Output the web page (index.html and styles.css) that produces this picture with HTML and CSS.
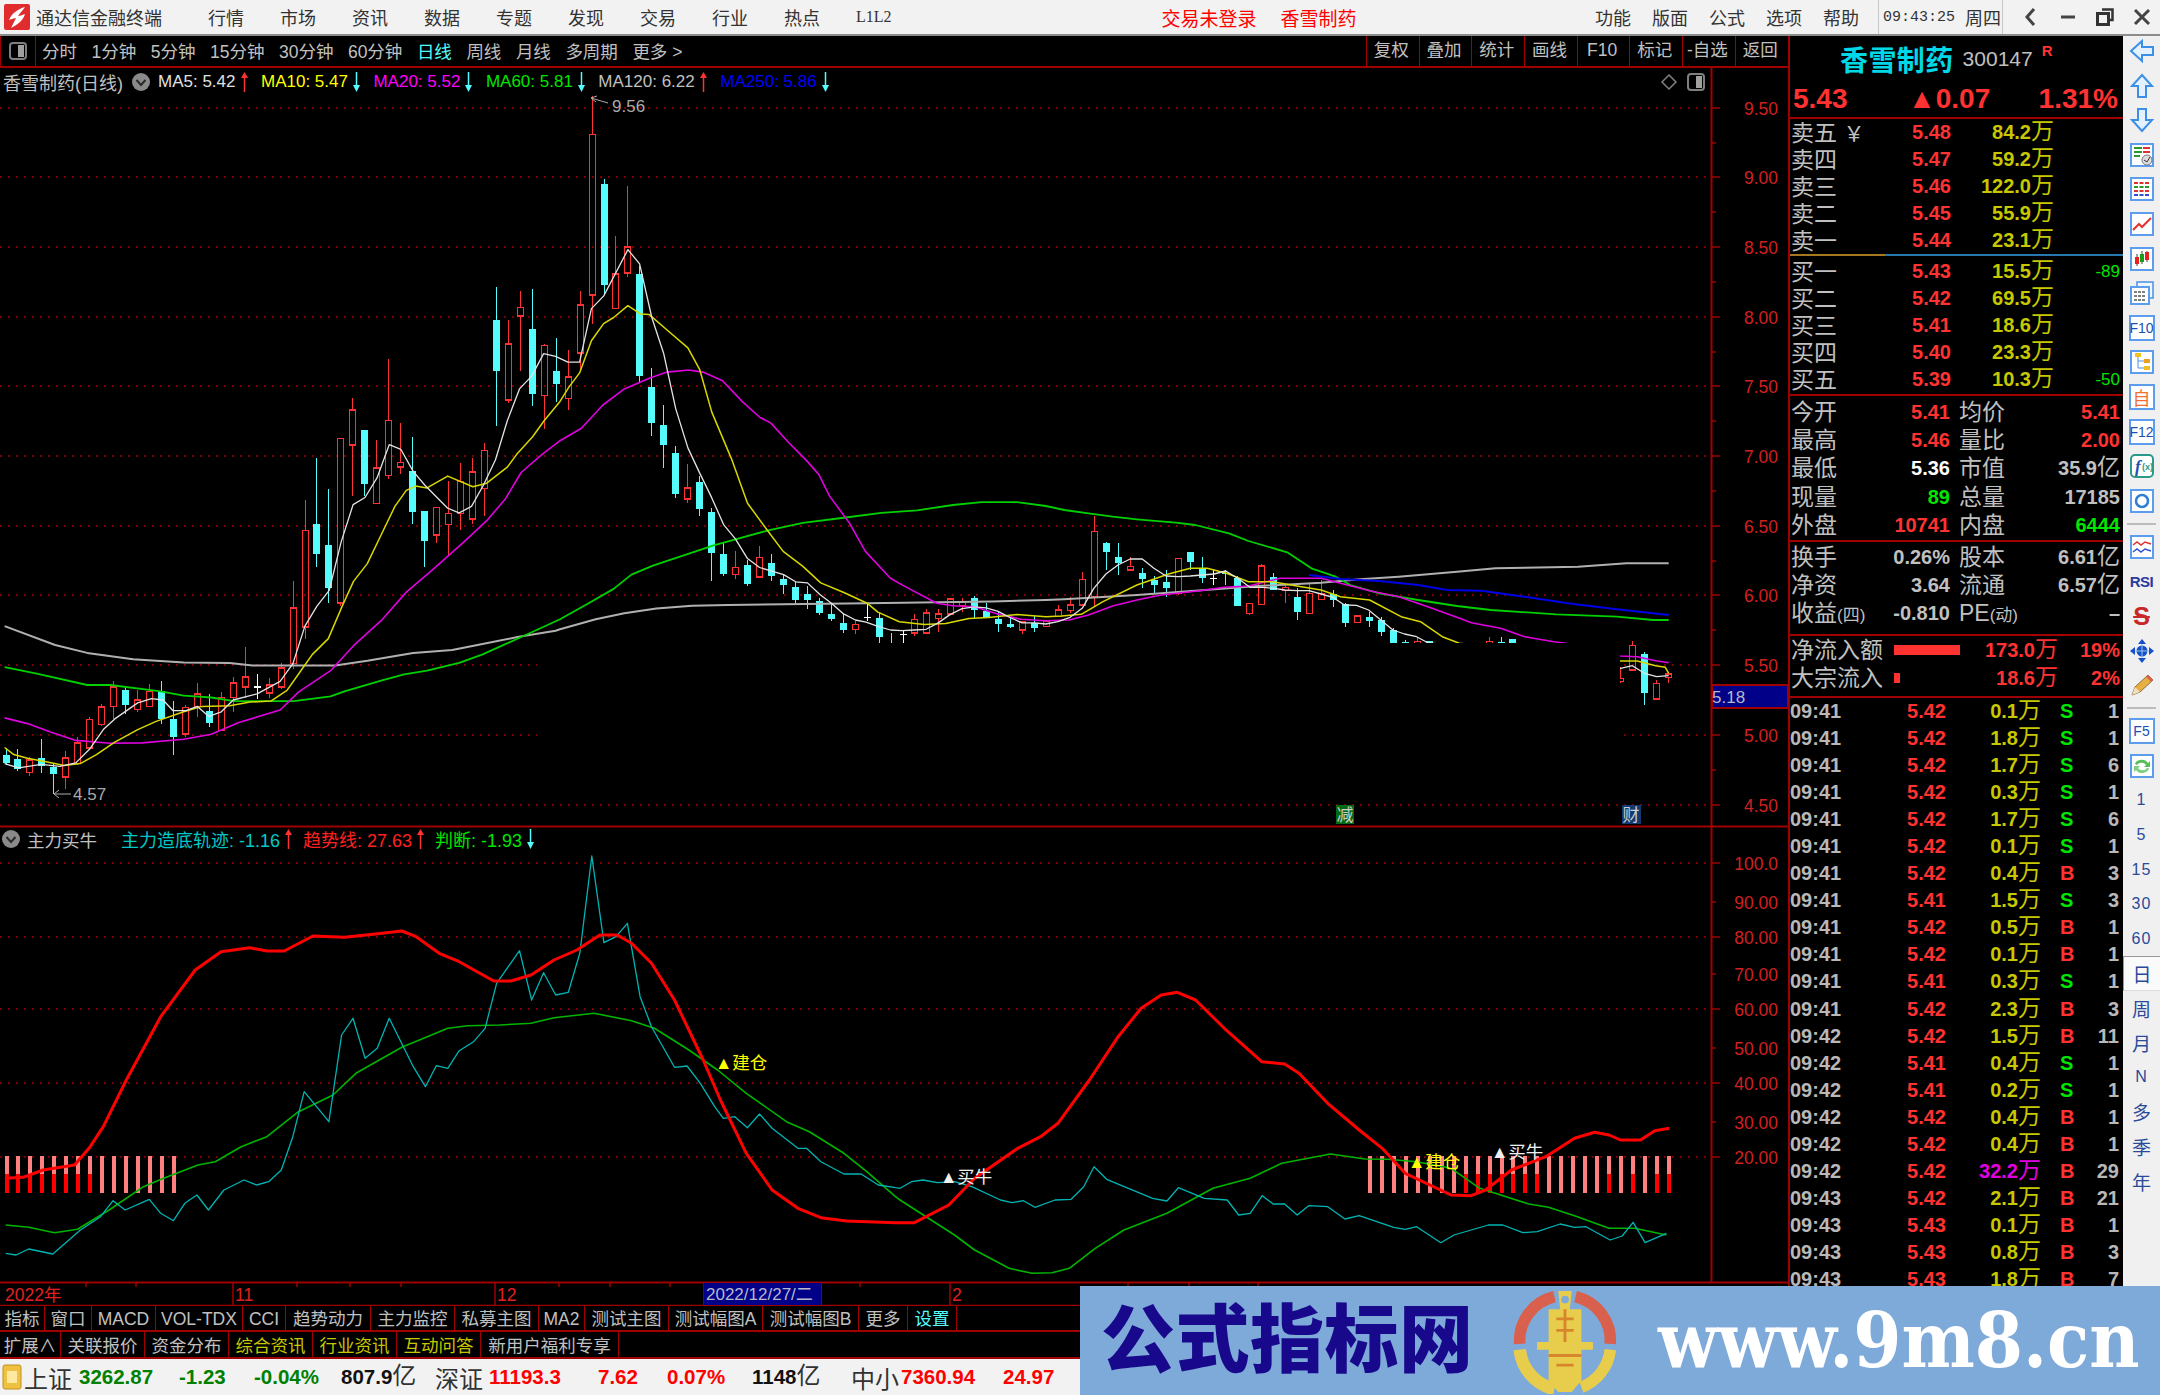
FILE: index.html
```html
<!DOCTYPE html>
<html lang="zh-CN">
<head>
    <meta charset="UTF-8">
    <title>通达信金融终端</title>
    <link rel="stylesheet" href="styles.css">
</head>
<body>
<svg class="defs">
    <symbol id="up" viewBox="0 0 9 20"><path d="M4.5 4V20" stroke="#ff3232" stroke-width="1.5"/><path d="M4.5 0L8 6H1Z" fill="#ff3232"/></symbol>
    <symbol id="dn" viewBox="0 0 9 20"><path d="M4.5 0V15" stroke="#54fcfc" stroke-width="1.5"/><path d="M4.5 20L1 13H8Z" fill="#54fcfc"/></symbol>
    <symbol id="chev" viewBox="0 0 18 18"><circle cx="9" cy="9" r="9" fill="#8a8a8a"/><path d="M4.5 7L9 12L13.500 7" fill="none" stroke="#2a2a2a" stroke-width="2"/></symbol>
    <symbol id="panebtn" viewBox="0 0 18 18"><rect x="1" y="1" width="16" height="16" rx="3" fill="none" stroke="#808080" stroke-width="2"/><rect x="9" y="3" width="6" height="12" fill="#a0a0a0"/></symbol>
</svg>
<div class="app">
    <div class="titlebar">
        <svg class="logo" viewBox="0 0 26 26"><rect width="26" height="26" rx="2" fill="#e02c2c"/><path d="M21 3C14 5 8 9 5 16C8 15 10 14 12 14L7 24C13 21 19 17 21 10C18 11 16 12 14 12C16 9 19 6 21 3Z" fill="#fff"/></svg>
        <span class="app-name">通达信金融终端</span>
        <nav class="menu">
            <span>行情</span><span>市场</span><span>资讯</span><span>数据</span><span>专题</span><span>发现</span><span>交易</span><span>行业</span><span>热点</span><span class="l2">L1L2</span>
        </nav>
        <div class="alerts"><span>交易未登录</span><span>香雪制药</span></div>
        <nav class="menu2">
            <span>功能</span><span>版面</span><span>公式</span><span>选项</span><span>帮助</span>
        </nav>
        <div class="clock"><span class="time">09:43:25</span><span>周四</span></div>
        <div class="winbtns">
            <svg viewBox="0 0 20 20"><path d="M13 2L6 10L13 18" fill="none" stroke="#444" stroke-width="3"/></svg>
            <svg viewBox="0 0 20 20"><path d="M3 10H17" stroke="#444" stroke-width="3"/></svg>
            <svg viewBox="0 0 20 20"><path d="M7 2.500H17.500V13H14" fill="none" stroke="#333" stroke-width="2.500"/><rect x="2.500" y="6.500" width="11" height="11" fill="none" stroke="#333" stroke-width="3"/></svg>
            <svg viewBox="0 0 20 20"><path d="M3 3L17 17M17 3L3 17" stroke="#444" stroke-width="3"/></svg>
        </div>
    </div>

    <div class="work">
        <div class="left">
            <div class="periods">
                <div class="pane-toggle"><svg><use href="#panebtn"/></svg></div>
                <div class="period-list">
                    <span>分时</span><span>1分钟</span><span>5分钟</span><span>15分钟</span><span>30分钟</span><span>60分钟</span><span class="on">日线</span><span>周线</span><span>月线</span><span>多周期</span><span>更多 &gt;</span>
                </div>
                <div class="chart-tools">
                    <span>复权</span><span>叠加</span><span>统计</span><span>画线</span><span>F10</span><span>标记</span><span>-自选</span><span>返回</span>
                </div>
            </div>
            <div class="charts">
                <svg id="chart" class="chart" viewBox="0 68 1788 1238"></svg>
                <div class="legend legend-main">
                    <span class="stock">香雪制药(日线)</span>
                    <svg class="chev"><use href="#chev"/></svg>
                    <span class="c-white">MA5: 5.42</span><svg class="arr"><use href="#up"/></svg>
                    <span class="c-yellow">MA10: 5.47</span><svg class="arr"><use href="#dn"/></svg>
                    <span class="c-magenta">MA20: 5.52</span><svg class="arr"><use href="#dn"/></svg>
                    <span class="c-green">MA60: 5.81</span><svg class="arr"><use href="#dn"/></svg>
                    <span class="c-gray">MA120: 6.22</span><svg class="arr"><use href="#up"/></svg>
                    <span class="c-blue">MA250: 5.86</span><svg class="arr"><use href="#dn"/></svg>
                </div>
                <div class="legend-icons">
                    <svg viewBox="0 0 18 18"><path d="M9 2L16 9L9 16L2 9Z" fill="none" stroke="#808080" stroke-width="1.500"/></svg>
                    <svg><use href="#panebtn"/></svg>
                </div>
                <div class="legend legend-sub">
                    <svg class="chev"><use href="#chev"/></svg>
                    <span class="stock name2">主力买牛</span>
                    <span class="c-cyan t1">主力造底轨迹: -1.16</span><svg class="arr"><use href="#up"/></svg>
                    <span class="c-red">趋势线: 27.63</span><svg class="arr"><use href="#up"/></svg>
                    <span class="c-green">判断: -1.93</span><svg class="arr"><use href="#dn"/></svg>
                </div>
            </div>
            <div class="tabs tabs1">
                <span>指标</span><span>窗口</span><span>MACD</span><span>VOL-TDX</span><span>CCI</span><span>趋势动力</span><span>主力监控</span><span>私募主图</span><span>MA2</span><span>测试主图</span><span>测试幅图A</span><span>测试幅图B</span><span>更多</span><span class="c-cyan">设置</span>
            </div>
            <div class="tabs tabs2">
                <span>扩展∧</span><span>关联报价</span><span>资金分布</span><span class="gold">综合资讯</span><span class="gold">行业资讯</span><span class="gold">互动问答</span><span>新用户福利专享</span>
            </div>
        </div>

        <div class="quote">
            <div class="q-head">
                <div class="q-name"><b>香雪制药</b><span>300147</span><i>R</i></div>
                <div class="q-price"><b>5.43</b><b class="chg">▲0.07</b><b class="pct">1.31%</b></div>
            </div>
            <div class="book sell">
                <div class="row"><span class="lbl">卖五 <small>￥</small></span><span class="px">5.48</span><span class="vol">84.2<em>万</em></span></div>
                <div class="row"><span class="lbl">卖四</span><span class="px">5.47</span><span class="vol">59.2<em>万</em></span></div>
                <div class="row"><span class="lbl">卖三</span><span class="px">5.46</span><span class="vol">122.0<em>万</em></span></div>
                <div class="row"><span class="lbl">卖二</span><span class="px">5.45</span><span class="vol">55.9<em>万</em></span></div>
                <div class="row"><span class="lbl">卖一</span><span class="px">5.44</span><span class="vol">23.1<em>万</em></span></div>
            </div>
            <div class="mid"><div class="mid-a"></div><div class="mid-b"></div></div>
            <div class="book buy">
                <div class="row"><span class="lbl">买一</span><span class="px">5.43</span><span class="vol">15.5<em>万</em></span><span class="delta">-89</span></div>
                <div class="row"><span class="lbl">买二</span><span class="px">5.42</span><span class="vol">69.5<em>万</em></span></div>
                <div class="row"><span class="lbl">买三</span><span class="px">5.41</span><span class="vol">18.6<em>万</em></span></div>
                <div class="row"><span class="lbl">买四</span><span class="px">5.40</span><span class="vol">23.3<em>万</em></span></div>
                <div class="row"><span class="lbl">买五</span><span class="px">5.39</span><span class="vol">10.3<em>万</em></span><span class="delta">-50</span></div>
            </div>
            <div class="stats s1">
                <span class="lbl">今开</span><span class="r">5.41</span><span class="lbl">均价</span><span class="r">5.41</span>
                <span class="lbl">最高</span><span class="r">5.46</span><span class="lbl">量比</span><span class="r">2.00</span>
                <span class="lbl">最低</span><span class="w">5.36</span><span class="lbl">市值</span><span class="g">35.9<em>亿</em></span>
                <span class="lbl">现量</span><span class="gr">89</span><span class="lbl">总量</span><span class="g">17185</span>
                <span class="lbl">外盘</span><span class="r">10741</span><span class="lbl">内盘</span><span class="gr">6444</span>
            </div>
            <div class="stats s2">
                <span class="lbl">换手</span><span class="g">0.26%</span><span class="lbl">股本</span><span class="g">6.61<em>亿</em></span>
                <span class="lbl">净资</span><span class="g">3.64</span><span class="lbl">流通</span><span class="g">6.57<em>亿</em></span>
                <span class="lbl">收益<small>(四)</small></span><span class="g">-0.810</span><span class="lbl">PE<small>(动)</small></span><span class="g">–</span>
            </div>
            <div class="flow">
                <div class="flow-row"><span class="lbl">净流入额</span><div class="flow-bar"><div class="bar bar-a"></div></div><span class="r amt">173.0<em>万</em></span><span class="r share">19%</span></div>
                <div class="flow-row"><span class="lbl">大宗流入</span><div class="flow-bar"><div class="bar bar-b"></div></div><span class="r amt">18.6<em>万</em></span><span class="r share">2%</span></div>
            </div>
            <div class="ticks">
                <div class="tick"><span>09:41</span><span class="px">5.42</span><span class="v">0.1<em>万</em></span><span class="s">S</span><span>1</span></div>
                <div class="tick"><span>09:41</span><span class="px">5.42</span><span class="v">1.8<em>万</em></span><span class="s">S</span><span>1</span></div>
                <div class="tick"><span>09:41</span><span class="px">5.42</span><span class="v">1.7<em>万</em></span><span class="s">S</span><span>6</span></div>
                <div class="tick"><span>09:41</span><span class="px">5.42</span><span class="v">0.3<em>万</em></span><span class="s">S</span><span>1</span></div>
                <div class="tick"><span>09:41</span><span class="px">5.42</span><span class="v">1.7<em>万</em></span><span class="s">S</span><span>6</span></div>
                <div class="tick"><span>09:41</span><span class="px">5.42</span><span class="v">0.1<em>万</em></span><span class="s">S</span><span>1</span></div>
                <div class="tick"><span>09:41</span><span class="px">5.42</span><span class="v">0.4<em>万</em></span><span class="b">B</span><span>3</span></div>
                <div class="tick"><span>09:41</span><span class="px">5.41</span><span class="v">1.5<em>万</em></span><span class="s">S</span><span>3</span></div>
                <div class="tick"><span>09:41</span><span class="px">5.42</span><span class="v">0.5<em>万</em></span><span class="b">B</span><span>1</span></div>
                <div class="tick"><span>09:41</span><span class="px">5.42</span><span class="v">0.1<em>万</em></span><span class="b">B</span><span>1</span></div>
                <div class="tick"><span>09:41</span><span class="px">5.41</span><span class="v">0.3<em>万</em></span><span class="s">S</span><span>1</span></div>
                <div class="tick"><span>09:41</span><span class="px">5.42</span><span class="v">2.3<em>万</em></span><span class="b">B</span><span>3</span></div>
                <div class="tick"><span>09:42</span><span class="px">5.42</span><span class="v">1.5<em>万</em></span><span class="b">B</span><span>11</span></div>
                <div class="tick"><span>09:42</span><span class="px">5.41</span><span class="v">0.4<em>万</em></span><span class="s">S</span><span>1</span></div>
                <div class="tick"><span>09:42</span><span class="px">5.41</span><span class="v">0.2<em>万</em></span><span class="s">S</span><span>1</span></div>
                <div class="tick"><span>09:42</span><span class="px">5.42</span><span class="v">0.4<em>万</em></span><span class="b">B</span><span>1</span></div>
                <div class="tick"><span>09:42</span><span class="px">5.42</span><span class="v">0.4<em>万</em></span><span class="b">B</span><span>1</span></div>
                <div class="tick"><span>09:42</span><span class="px">5.42</span><span class="v big">32.2<em>万</em></span><span class="b">B</span><span>29</span></div>
                <div class="tick"><span>09:43</span><span class="px">5.42</span><span class="v">2.1<em>万</em></span><span class="b">B</span><span>21</span></div>
                <div class="tick"><span>09:43</span><span class="px">5.43</span><span class="v">0.1<em>万</em></span><span class="b">B</span><span>1</span></div>
                <div class="tick"><span>09:43</span><span class="px">5.43</span><span class="v">0.8<em>万</em></span><span class="b">B</span><span>3</span></div>
                <div class="tick"><span>09:43</span><span class="px">5.43</span><span class="v">1.8<em>万</em></span><span class="b">B</span><span>7</span></div>
            </div>
        </div>

        <div class="side">
            <svg class="ico" viewBox="0 0 26 26"><path d="M2 13L13 3V9H24V17H13V23Z" fill="#e4f1ff" stroke="#3b8fe6" stroke-width="2"/></svg>
            <svg class="ico" viewBox="0 0 26 26"><path d="M13 2L23 13H17V24H9V13H3Z" fill="#e4f1ff" stroke="#3b8fe6" stroke-width="2"/></svg>
            <svg class="ico" viewBox="0 0 26 26"><path d="M13 24L3 13H9V2H17V13H23Z" fill="#e4f1ff" stroke="#3b8fe6" stroke-width="2"/></svg>
            <svg class="ico" viewBox="0 0 26 26"><rect class="frame" x="2" y="2" width="22" height="22"/><path d="M5 6H13M5 10H13M5 14H11" stroke="#2a9a2a" stroke-width="2"/><path d="M14 6H21M14 10H21" stroke="#e03030" stroke-width="2"/><circle cx="18" cy="18" r="5" fill="#ddd" stroke="#777"/><path d="M15 18L18 20L21 15" fill="none" stroke="#333"/></svg>
            <svg class="ico" viewBox="0 0 26 26"><rect class="frame" x="2" y="2" width="22" height="22"/><path d="M5 7H21M5 15H21" stroke="#e03030" stroke-width="2" stroke-dasharray="4 1.500"/><path d="M5 11H21" stroke="#2a9a2a" stroke-width="2" stroke-dasharray="4 1.500"/><path d="M5 19H21" stroke="#3050d0" stroke-width="2" stroke-dasharray="4 1.500"/></svg>
            <svg class="ico" viewBox="0 0 26 26"><rect class="frame" x="2" y="2" width="22" height="22"/><path d="M4 19L10 13L13 16L22 7" fill="none" stroke="#e83030" stroke-width="2"/></svg>
            <svg class="ico" viewBox="0 0 26 26"><rect class="frame" x="2" y="2" width="22" height="22"/><path d="M8 8V20M13 5V18M18 5V16" stroke="#444"/><rect x="6" y="11" width="4" height="7" fill="#e82020"/><rect x="11" y="8" width="4" height="8" fill="#18a018"/><rect x="16" y="6" width="4" height="8" fill="#e82020"/></svg>
            <svg class="ico" viewBox="0 0 26 26"><rect x="8" y="2" width="16" height="16" fill="#eef6ff" stroke="#4a90e0" stroke-width="1.500"/><rect class="frame" x="2" y="7" width="18" height="17"/><path d="M5 12H17M5 16H17M5 20H17" stroke="#555" stroke-width="1.500" stroke-dasharray="3 1"/></svg>
            <div class="ico-text framed">F10</div>
            <svg class="ico" viewBox="0 0 26 26"><rect class="frame" x="2" y="2" width="22" height="22"/><rect x="6" y="4" width="6" height="4" fill="#f0c020"/><rect x="15" y="10" width="6" height="4" fill="#f0a020"/><rect x="15" y="17" width="6" height="4" fill="#f0c020"/><path d="M9 8V19H15M9 12H15" fill="none" stroke="#4a90e0"/></svg>
            <div class="ico-text framed orange">自</div>
            <div class="ico-text framed">F12</div>
            <svg class="ico" viewBox="0 0 26 26"><rect x="2" y="2" width="22" height="22" rx="4" fill="#fff" stroke="#2a9a8a" stroke-width="2"/><text x="6" y="19" class="fx">f</text><text x="13" y="17" class="fx2">(x)</text></svg>
            <svg class="ico" viewBox="0 0 26 26"><rect class="frame" x="2" y="2" width="22" height="22"/><circle cx="13" cy="13" r="6" fill="none" stroke="#2f7fd8" stroke-width="2.500"/></svg>
            <div class="side-sep"></div>
            <svg class="ico" viewBox="0 0 26 26"><rect class="frame" x="2" y="2" width="22" height="22"/><path d="M4 11L8 8L12 11L16 8L22 10" fill="none" stroke="#e03030" stroke-width="1.500"/><path d="M4 18L8 15L12 18L16 15L22 17" fill="none" stroke="#3050d0" stroke-width="1.500"/></svg>
            <div class="ico-text rsi">RSI</div>
            <div class="ico-text dollar">S</div>
            <svg class="ico" viewBox="0 0 26 26"><path d="M13 1L17 6H9ZM13 25L9 20H17ZM1 13L6 9V17ZM25 13L20 17V9Z" fill="#1450c8"/><circle cx="13" cy="13" r="5.500" fill="#1450c8"/><path d="M13 6V20M6 13H20" stroke="#9cc0f0"/></svg>
            <svg class="ico" viewBox="0 0 26 26"><path d="M3 23L6 15L19 3L24 8L11 20Z" fill="#e8b040" stroke="#8a7040"/><path d="M3 23L6 15L11 20Z" fill="#f0e0c0"/><path d="M19 3L24 8L22 10L17 5Z" fill="#e06050"/></svg>
            <div class="side-sep"></div>
            <div class="ico-text framed">F5</div>
            <svg class="ico" viewBox="0 0 26 26"><rect class="frame" x="2" y="2" width="22" height="22"/><path d="M6 11A7 6 0 0 1 19 10L21 8V14H15L17 12A5 4 0 0 0 8 12Z" fill="#58c058"/><path d="M20 15A7 6 0 0 1 7 17L5 19V13H11L9 15A5 4 0 0 0 18 15Z" fill="#80d080"/></svg>
            <div class="per">1</div><div class="per">5</div><div class="per">15</div><div class="per">30</div><div class="per">60</div>
            <div class="per cn sel">日</div><div class="per cn">周</div><div class="per cn">月</div><div class="per">N</div><div class="per cn">多</div><div class="per cn">季</div><div class="per cn">年</div>
        </div>
    </div>

    <div class="status">
        <svg class="st-ico" viewBox="0 0 20 26"><rect x="1" y="1" width="18" height="24" rx="2" fill="#f0c040" stroke="#c09020"/><rect x="5" y="7" width="10" height="12" fill="#ffe9a0"/></svg>
        <span class="idx">上证</span><span class="dn">3262.87</span><span class="dn">-1.23</span><span class="dn">-0.04%</span><span class="amt">807.9<em>亿</em></span>
        <span class="idx">深证</span><span class="upc">11193.3</span><span class="upc">7.62</span><span class="upc">0.07%</span><span class="amt">1148<em>亿</em></span>
        <span class="idx">中小</span><span class="upc">7360.94</span><span class="upc">24.97</span>
    </div>

    <div class="banner">
        <span class="bn-cn">公式指标网</span>
        <svg class="bn-logo" viewBox="0 0 110 110">
            <path d="M8 58A47 47 0 0 1 44 9" fill="none" stroke="#d9604c" stroke-width="12"/>
            <path d="M66 9A47 47 0 0 1 102 58" fill="none" stroke="#d9604c" stroke-width="12"/>
            <path d="M8 64A47 47 0 0 0 44 105" fill="none" stroke="#e8cd4c" stroke-width="13"/>
            <path d="M102 64A47 47 0 0 1 72 103" fill="none" stroke="#e8cd4c" stroke-width="12"/>
            <path d="M48 3H62L60 22H72V56H84V64H72V96L62 108H48L38 96V64H26V56H38V22H50Z" fill="#e8cd4c"/>
            <circle cx="55" cy="12" r="4" fill="#7eaad9"/>
            <path d="M46 32H64M46 44H64M38 70H72M46 80H64M55 22V56" stroke="#d8862c" stroke-width="3"/>
        </svg>
        <span class="bn-url">www.9m8.cn</span>
    </div>
</div>
<script src="chart.js"></script>
</body>
</html>
```
FILE: styles.css
```css
*{
    box-sizing: border-box;
}
html, body{
    margin: 0;
    background: #000;
}
body{
    font-family: "Liberation Sans", "Noto Sans CJK SC", sans-serif;
    color: #c0c0c0;
}
em{
    font-style: normal;
    font-weight: 400;
    line-height: 0;
}
.defs{
    display: none;
}
.app{
    position: relative;
    width: 2160px;
    height: 1395px;
    overflow: hidden;
    display: flex;
    flex-direction: column;
}

/* title bar */
.titlebar{
    height: 36px;
    flex: none;
    display: flex;
    align-items: center;
    background: #f2f2f2;
    border-bottom: 2px solid #8c8c8c;
    color: #333;
    font-size: 18px;
    padding-left: 4px;
}
.logo{
    width: 26px;
    height: 26px;
    flex: none;
}
.app-name{
    margin-left: 6px;
}
.menu{
    display: flex;
    gap: 36px;
    margin-left: 46px;
}
.l2{
    font-family: "Liberation Serif", serif;
    font-size: 16px;
    line-height: 26px;
}
.alerts{
    display: flex;
    gap: 24px;
    margin-left: 270px;
    color: #f00;
    font-size: 19px;
}
.menu2{
    display: flex;
    gap: 21px;
    margin-left: auto;
}
.clock{
    height: 34px;
    margin-left: 19px;
    padding: 0 4px;
    width: 125px;
    border-left: 1px solid #c8c8c8;
    border-right: 1px solid #c8c8c8;
    display: flex;
    align-items: center;
    gap: 10px;
    white-space: nowrap;
}
.time{
    font-family: "Liberation Mono", monospace;
    font-size: 15px;
}
.winbtns{
    display: flex;
    gap: 17px;
    margin-left: 18px;
    margin-right: 8px;
}
.winbtns svg{
    width: 20px;
    height: 20px;
}

/* work area */
.work{
    flex: none;
    height: 1323px;
    display: flex;
}
.left{
    width: 1788px;
    flex: none;
}
.periods{
    height: 32px;
    display: flex;
    border-bottom: 2px solid #a00000;
    font-size: 17.500px;
}
.pane-toggle{
    width: 36px;
    border-left: 1px solid #a00000;
    border-right: 1px solid #a00000;
    display: flex;
    align-items: center;
    justify-content: center;
}
.pane-toggle svg{
    width: 18px;
    height: 18px;
}
.period-list{
    display: flex;
    align-items: center;
    gap: 14.500px;
    margin-left: 6px;
    padding-bottom: 2px;
}
.period-list .on{
    color: #54fcfc;
}
.chart-tools{
    margin-left: auto;
    display: grid;
    grid-template-columns: repeat(8, 52.700px);
    width: 422px;
}
.chart-tools span{
    border-left: 1px solid #a00000;
    text-align: center;
    line-height: 28px;
    padding-right: 3px;
}
.charts{
    position: relative;
    height: 1238px;
}
.chart{
    display: block;
    width: 1788px;
    height: 1238px;
}
.chart text{
    font-family: "Liberation Sans", "Noto Sans CJK SC", sans-serif;
}
.axis-label{
    fill: #d02020;
    font-size: 17.500px;
    text-anchor: end;
}
.mark-label{
    fill: #aaa;
    font-size: 17px;
}
.sig{
    font-size: 17.500px;
}
.time-label{
    fill: #e02020;
    font-size: 17.500px;
}
.time-sel{
    fill: #b8b8c8;
    font-size: 17px;
}
.tag-label{
    fill: #ccc;
    font-size: 17px;
    text-anchor: middle;
}
.legend{
    position: absolute;
    left: 3px;
    display: flex;
    align-items: center;
    font-size: 17px;
    white-space: nowrap;
}
.legend-main{
    top: 1px;
}
.legend-sub{
    top: 758px;
    left: 2px;
}
.legend-icons{
    position: absolute;
    top: 5px;
    left: 1660px;
    display: flex;
    gap: 9px;
}
.legend-icons svg{
    width: 18px;
    height: 18px;
}
.legend .stock{
    font-size: 18px;
    color: #c0c0c0;
    margin-right: 9px;
}
.legend .name2{
    font-size: 17.500px;
    margin-left: 7px;
    margin-right: 24px;
}
.legend-sub span:not(.stock){
    font-size: 18px;
}
.chev{
    width: 18px;
    height: 18px;
    margin-right: 8px;
    flex: none;
}
.legend-sub .chev{
    margin-right: 0;
}
.arr{
    width: 9px;
    height: 20px;
    margin: 0 12.500px 0 4px;
    flex: none;
}
.legend-sub .arr{
    margin-right: 10px;
}
.c-white{ color: #e0e0e0; }
.c-yellow{ color: #ffff00; }
.c-magenta{ color: #ff00ff; }
.c-green{ color: #00e600; }
.c-gray{ color: #c0c0c0; }
.c-blue{ color: #0000ff; }
.c-cyan{ color: #00c8c8; }
.c-red{ color: #ff2020; }
.tabs{
    display: grid;
    font-size: 17.500px;
    border-bottom: 2px solid #a00000;
}
.tabs span{
    border-right: 1px solid #a00000;
    text-align: center;
    white-space: nowrap;
    overflow: hidden;
}
.tabs .c-cyan{
    color: #54fcfc;
}
.tabs .gold{
    color: #c8c800;
}
.tabs1{
    height: 26px;
    line-height: 27px;
    grid-template-columns: 45px 47px 64px 87px 43px 85px 84px 84px 46px 84px 94px 96px 49px 49px;
}
.tabs2{
    height: 27px;
    line-height: 28px;
    grid-template-columns: 61px 84px 84px 84px 84px 84px 138px;
}

/* quote panel */
.quote{
    width: 335px;
    flex: none;
    border-left: 2px solid #a00000;
    overflow: hidden;
    font-weight: 700;
    font-size: 20px;
}
.lbl{
    font-size: 23px;
    font-weight: 400;
    line-height: 1;
    white-space: nowrap;
}
.lbl small{
    font-size: 17px;
}
.q-head{
    height: 83px;
    border-bottom: 2px solid #a00000;
}
.q-name{
    height: 46px;
    display: flex;
    align-items: center;
    padding-left: 50px;
    font-weight: 400;
}
.q-name b{
    font-size: 28px;
    letter-spacing: .4px;
    color: #00d8e8;
}
.q-name span{
    font-size: 21px;
    margin-left: 9px;
    color: #c0c0c0;
}
.q-name i{
    font-style: normal;
    font-weight: 700;
    font-size: 15px;
    color: #ff3232;
    margin: -18px 0 0 9px;
}
.q-price{
    display: grid;
    grid-template-columns: 115px 110px 1fr;
    padding-left: 3px;
    padding-right: 5px;
    color: #ff3232;
    font-size: 28px;
    line-height: 34px;
}
.q-price .pct{
    text-align: right;
}
.book{
    height: 135px;
}
.sell{
    padding-top: 1px;
}
.sell small{
    font-size: 21px;
}
.row{
    display: grid;
    grid-template-columns: 161px 103px 66px;
    height: 27px;
    align-items: center;
    position: relative;
    color: #c8c800;
}
.row .lbl{
    grid-column: 1;
    color: #c0c0c0;
    position: absolute;
    left: 1px;
}
.row .px{
    color: #ff3232;
    text-align: right;
    grid-column: 1;
    padding-bottom: 2px;
}
.row .vol{
    grid-column: 2;
    text-align: right;
    white-space: nowrap;
    padding-bottom: 2px;
}
.row em{
    font-size: 23px;
}
.delta{
    grid-column: 3;
    text-align: right;
    color: #00e600;
    font-weight: 400;
    font-size: 17px;
    padding-bottom: 2px;
}
.mid{
    height: 2px;
    display: flex;
}
.mid-a{
    width: 95px;
    background: #a87820;
}
.mid-b{
    flex: 1;
    background: #2878b0;
}
.buy{
    height: 140px;
    padding-top: 3px;
    border-bottom: 2px solid #a00000;
}
.stats{
    display: grid;
    grid-template-columns: 77px 82px 89px 81px;
    grid-auto-rows: 28.300px;
    align-items: center;
    padding-left: 1px;
    color: #c0c0c0;
}
.stats span{
    white-space: nowrap;
}
.stats span:not(.lbl){
    text-align: right;
}
.stats span:nth-child(4n+3){
    padding-left: 9px;
}
.stats em{
    font-size: 23px;
}
.s1{
    height: 146px;
    padding-top: 2px;
    border-bottom: 2px solid #a00000;
}
.s2{
    height: 94px;
    padding-top: 1px;
    border-bottom: 2px solid #a00000;
}
.r{ color: #ff3232; }
.w{ color: #fff; }
.gr{ color: #00e600; }
.g{ color: #c0c0c0; }
.flow{
    height: 62px;
    padding-left: 1px;
    border-bottom: 2px solid #a00000;
}
.flow-row{
    display: grid;
    grid-template-columns: 103px 66px 98px 62px;
    height: 28px;
    align-items: center;
}
.flow-bar{
    height: 10px;
}
.bar{
    height: 100%;
    background: #ff3232;
}
.bar-a{
    width: 66px;
}
.bar-b{
    width: 6px;
}
.amt, .share{
    text-align: right;
    white-space: nowrap;
}
.amt em{
    font-size: 23px;
}
.tick{
    display: grid;
    grid-template-columns: 52px 104px 95px 31px 47px;
    height: 27.050px;
    align-items: center;
    color: #b8b8b8;
}
.tick span:nth-child(2), .tick span:nth-child(3), .tick span:nth-child(5){
    text-align: right;
}
.tick span:nth-child(4){
    padding-left: 19px;
}
.tick .px{ color: #ff3232; }
.tick .v{ color: #c8c800; white-space: nowrap; }
.tick .v em{ font-size: 23px; }
.tick .big{ color: #e000e0; }
.tick .s{ color: #00e600; }
.tick .b{ color: #ff3232; }

/* right icon strip */
.side{
    width: 37px;
    flex: none;
    background: #f0f0f0;
    display: flex;
    flex-direction: column;
    align-items: center;
}
.ico{
    width: 26px;
    height: 26px;
    margin: 4.300px 0;
    flex: none;
}
.side > :first-child{
    margin-top: 2px;
}
.frame{
    fill: #fff;
    stroke: #5c9ded;
    stroke-width: 2;
}
.fx{
    font: italic 700 17px "Liberation Serif", serif;
    fill: #2050b0;
}
.fx2{
    font: 700 9px "Liberation Sans", sans-serif;
    fill: #2a9a8a;
}
.ico-text{
    width: 26px;
    height: 26px;
    margin: 4.300px 0;
    flex: none;
    display: flex;
    align-items: center;
    justify-content: center;
    font-size: 14px;
    font-weight: 400;
    color: #1c50b0;
}
.framed{
    background: #fff;
    border: 2px solid #5c9ded;
}
.orange{
    color: #f07030;
    font-size: 18px;
}
.rsi{
    font-size: 15px;
    font-weight: 700;
    color: #2a3aa0;
    letter-spacing: -.5px;
}
.dollar{
    font-size: 25px;
    font-weight: 700;
    color: #c82828;
    text-decoration: line-through;
}
.side-sep{
    width: 29px;
    height: 2px;
    margin: 5px 0 4.500px;
    background: #bcbcbc;
    flex: none;
}
.per{
    height: 34.600px;
    width: 100%;
    flex: none;
    display: flex;
    align-items: center;
    justify-content: center;
    font-size: 16px;
    letter-spacing: 1px;
    color: #2a4a9a;
}
.per.cn{
    font-size: 19px;
    letter-spacing: 0;
}
.sel{
    background: #fafafa;
    border-top: 1px solid #999;
    border-left: 1px solid #999;
    border-bottom: 1px solid #ddd;
}

/* market status */
.status{
    height: 36px;
    flex: none;
    background: #f2f2f2;
    display: grid;
    grid-template-columns: 22px 55px 100px 75px 87px 94px 54px 109px 69px 85px 99px 50px 102px 75px;
    align-items: center;
    font-size: 20.500px;
    font-weight: 700;
    color: #111;
    white-space: nowrap;
    padding-left: 2px;
}
.st-ico{
    width: 20px;
    height: 26px;
}
.status em{
    font-size: 24px;
    color: #333;
}
.status .amt{
    text-align: left;
}
.idx{
    font-size: 24px;
    font-weight: 400;
    color: #333;
}
.dn{
    color: #008000;
}
.upc{
    color: #f00;
}

/* watermark */
.banner{
    position: absolute;
    left: 1080px;
    top: 1286px;
    width: 1080px;
    height: 109px;
    background: #7eaad9;
    display: flex;
    align-items: center;
}
.bn-cn{
    margin-left: 21px;
    width: 376px;
    font-size: 74px;
    font-weight: 900;
    letter-spacing: .5px;
    line-height: 1;
    color: #18088c;
    white-space: nowrap;
}
.bn-logo{
    width: 110px;
    height: 106px;
    margin-left: 33px;
    flex: none;
}
.bn-url{
    margin-left: 38px;
    font-family: "DejaVu Serif Condensed", "DejaVu Serif", serif;
    font-stretch: condensed;
    font-size: 77px;
    font-weight: 700;
    line-height: 1;
    color: #fff;
    white-space: nowrap;
}
```
FILE: chart.js
```js
// chart data was read off in zoomed views, so each block has its own scale back to page px
const Z7 = ([x, y]) => [x / 2.178, 260 + y / 2.8]
const Z8 = ([x, y]) => [560 + x / 2.8, 80 + y / 2.8]
const Z9 = ([x, y]) => [1040 + x / 2.063, 500 + y / 3]
const Z10 = ([x, y]) => [x / 1.742, 820 + y / 3]
const Z11 = ([x, y]) => [900 + x / 1.742, 820 + y / 3]

const candleX = i => 5.5 + 11.96 * i
const RED = '#ff3232', CYAN = '#54fcfc', GRID = '#a00000'

// [index, high, bodyTop, bodyBottom, low, kind]  r = up, c = down, w = doji
const candles7 = [[0,1365,1385,1408,1415,'c'],[1,1370,1398,1425,1432,'c'],[2,1392,1400,1435,1445,'r'],[3,1340,1395,1418,1435,'c'],
[4,1412,1420,1440,1495,'c'],[5,1375,1395,1447,1480,'r'],[6,1335,1352,1410,1415,'r'],[7,1280,1287,1367,1372,'r'],[8,1243,1252,1300,1305,'r'],
[9,1180,1195,1250,1285,'r'],[10,1195,1205,1245,1270,'c'],[11,1205,1232,1258,1265,'r'],[12,1188,1208,1250,1250,'r'],[13,1180,1208,1285,1300,'c'],
[14,1235,1285,1335,1385,'c'],[15,1245,1253,1327,1335,'r'],[16,1185,1215,1250,1280,'r'],[17,1215,1262,1297,1308,'c'],[18,1210,1225,1318,1320,'r'],
[19,1168,1185,1225,1265,'r'],[20,1083,1168,1195,1225,'r'],[21,1160,1195,1195,1228,'w'],[22,1170,1190,1212,1225,'r'],[23,1128,1143,1195,1200,'r'],
[24,898,975,1130,1145,'r'],[25,672,757,1027,1060,'r'],[26,555,738,822,860,'c'],[27,642,798,918,960,'c'],[28,500,500,960,970,'r'],[29,385,420,518,662,'r'],
[30,475,475,628,660,'c'],[31,503,583,682,682,'r'],[32,277,450,603,612,'r'],[33,457,567,580,600,'r'],[34,495,592,705,738,'c'],[35,702,702,788,860,'c'],
[36,693,693,770,792,'r'],[37,620,710,740,825,'r'],[38,567,620,710,755,'r'],[39,555,593,725,738,'r'],[40,512,533,640,718,'r'],[41,75,167,310,465,'c'],
[42,167,235,392,400,'r'],[43,88,133,157,310,'r'],[44,80,192,376,410,'c'],[45,235,240,380,472,'r'],[46,218,310,347,398,'c']]
const candles8 = [[47,755,832,892,925,'r'],[48,592,630,765,815,'r'],[49,45,152,602,682,'r'],[50,278,290,573,600,'c'],[51,437,543,640,640,'r'],
[52,298,467,540,552,'r'],[53,520,542,830,845,'c'],[54,805,860,960,998,'c'],[55,910,965,1022,1085,'c'],[56,1025,1045,1158,1170,'c'],[57,1075,1143,1173,1183,'r'],
[58,1110,1125,1200,1220,'c'],[59,1198,1210,1325,1402,'c'],[60,1295,1327,1382,1390,'c'],[61,1320,1365,1385,1397,'r'],[62,1345,1357,1410,1418,'c'],
[63,1305,1337,1392,1392,'r'],[64,1327,1352,1388,1402,'c'],[65,1385,1398,1413,1440,'c'],[66,1405,1420,1457,1465,'c'],[67,1418,1440,1457,1480,'c'],
[68,1450,1458,1493,1498,'c'],[69,1465,1495,1510,1515,'c'],[70,1495,1520,1540,1548,'c'],[71,1515,1525,1538,1552,'r'],[72,1465,1505,1505,1515,'w'],
[73,1490,1505,1560,1575,'c'],[74,1548,1558,1558,1575,'c'],[75,1540,1552,1552,1575,'w'],[76,1495,1510,1548,1558,'r'],[77,1480,1492,1548,1548,'r'],
[78,1480,1495,1508,1545,'r'],[79,1453,1453,1495,1495,'r'],[80,1450,1462,1472,1490,'r'],[81,1445,1450,1485,1508,'c'],[82,1465,1487,1507,1507,'c'],
[83,1490,1510,1522,1545,'c'],[84,1505,1524,1532,1535,'c'],[85,1515,1518,1540,1552,'r'],[86,1500,1520,1533,1545,'c']]
const candles9 = [[87,365,365,380,380,'r'],[88,315,330,350,350,'r'],[89,290,315,332,340,'r'],[90,215,238,315,318,'r'],[91,48,95,290,320,'r'],
[92,125,130,157,210,'c'],[93,130,170,190,225,'c'],[94,170,200,210,213,'r'],[95,205,220,237,265,'c'],[96,228,240,255,280,'c'],[97,210,247,265,290,'c'],
[98,175,175,280,285,'r'],[99,155,157,187,210,'c'],[100,170,205,235,250,'c'],[101,210,235,235,255,'w'],[102,210,218,222,255,'c'],[103,228,235,318,318,'c'],
[104,310,310,340,345,'r'],[105,193,198,313,313,'r'],[106,220,230,270,270,'c'],[107,255,262,272,310,'r'],[108,265,292,337,360,'c'],[109,250,280,340,340,'r'],
[110,240,280,298,298,'r'],[111,270,282,300,322,'c'],[112,310,312,368,382,'c'],[113,348,348,368,368,'r'],[114,335,352,363,382,'c'],[115,350,360,395,408,'c'],
[116,385,390,430,440,'c'],[117,420,425,440,440,'c'],[118,410,425,440,440,'r'],[119,423,423,440,440,'c'],[124,410,425,440,440,'r'],[125,410,425,440,440,'c'],
[126,418,418,440,440,'c'],[135,500,535,545,550,'r'],[136,422,437,510,510,'r'],[137,455,463,580,615,'c'],[138,540,550,597,597,'r'],[139,515,522,532,548,'r']]

// moving averages, three blocks per line, cut where the blocks meet
const joinMain = (a, b, c) => [
    ...a.map(Z7).filter(p => p[0] < 560),
    ...b.map(Z8).filter(p => p[0] >= 560 && p[0] < 1045),
    ...c.map(Z9).filter(p => p[0] >= 1045)
]
const ma5 = joinMain(
    [[10,1410],[40,1422],[90,1412],[130,1418],[165,1408],[195,1370],[225,1315],[250,1285],[300,1240],[330,1228],[355,1232],[377,1262],[405,1262],[430,1250],[455,1278],[482,1265],[508,1232],[560,1215],[610,1180],[638,1130],[664,1025],[690,970],[717,925],[743,790],[769,685],[795,665],[821,610],[848,517],[873,530],[900,592],[925,630],[948,660],[975,695],[1000,708],[1027,690],[1053,630],[1079,560],[1105,450],[1132,360],[1158,325],[1184,262],[1210,270]],
    [[22,790],[55,790],[88,640],[122,605],[190,475],[223,515],[257,665],[290,765],[324,920],[358,1030],[391,1100],[425,1170],[458,1245],[491,1285],[525,1340],[559,1365],[593,1375],[626,1385],[660,1405],[693,1408],[727,1440],[760,1465],[794,1495],[827,1512],[857,1518],[890,1530],[925,1540],[958,1542],[992,1540],[1025,1538],[1059,1520],[1092,1497],[1126,1480],[1160,1475],[1193,1478],[1227,1488],[1260,1505],[1294,1520],[1328,1520]],
    [[12,372],[37,365],[62,352],[87,325],[111,265],[136,222],[161,195],[186,177],[211,177],[235,205],[260,228],[285,230],[310,228],[334,225],[359,222],[383,213],[408,235],[433,262],[458,262],[483,265],[505,270],[530,272],[555,272],[580,282],[604,292],[628,315],[653,316],[678,330],[703,360],[728,390],[752,402],[777,410],[800,428],[1198,505],[1222,497],[1247,520],[1272,530],[1297,527]])
const ma10 = joinMain(
    [[10,1365],[30,1385],[60,1395],[100,1405],[140,1415],[175,1410],[210,1385],[250,1350],[300,1315],[340,1292],[400,1265],[440,1250],[500,1248],[545,1238],[590,1235],[625,1205],[650,1160],[680,1105],[715,1060],[745,970],[770,900],[800,850],[830,770],[860,690],[885,645],[905,633],[930,638],[975,605],[1030,635],[1060,625],[1105,580],[1125,545],[1160,495],[1185,450]],
    [[0,900],[25,860],[55,820],[88,730],[122,682],[150,665],[190,632],[225,655],[250,657],[300,700],[358,750],[391,810],[425,930],[480,1060],[525,1185],[580,1260],[625,1320],[680,1362],[730,1408],[795,1435],[860,1465],[890,1490],[950,1517],[1020,1525],[1080,1522],[1145,1508],[1200,1505],[1280,1497]],
    [[12,350],[45,348],[85,343],[130,305],[200,255],[265,222],[310,205],[345,205],[385,220],[430,245],[480,245],[530,258],[580,270],[620,290],[680,300],[745,350],[785,365],[830,410],[865,430],[1198,483],[1232,483],[1270,497],[1290,502],[1297,520]])
const ma20 = joinMain(
    [[10,1282],[60,1298],[110,1322],[165,1345],[240,1353],[310,1352],[400,1342],[460,1328],[520,1295],[610,1260],[650,1210],[720,1150],[770,1080],[830,1010],[885,930],[940,870],[1010,790],[1060,730],[1100,670],[1135,595],[1180,545]],
    [[0,1010],[60,975],[120,910],[180,865],[250,835],[300,818],[360,812],[400,818],[455,842],[510,900],[560,945],[590,960],[640,1015],[690,1065],[725,1105],[755,1165],[810,1240],[855,1320],[925,1395],[960,1415],[1055,1465],[1100,1472],[1160,1475],[1225,1495],[1290,1510]],
    [[12,362],[60,360],[100,345],[150,318],[200,300],[250,285],[330,272],[380,262],[430,258],[495,235],[580,235],[620,250],[680,272],[740,290],[800,320],[860,352],[890,368],[950,385],[1000,410],[1060,425],[1085,430],[1198,468],[1232,470],[1270,482],[1297,488]])
const ma60 = joinMain(
    [[10,1140],[80,1158],[190,1190],[240,1190],[350,1208],[400,1220],[460,1225],[510,1235],[640,1235],[720,1222],[750,1208],[830,1178],[880,1160],[930,1150],[1000,1128],[1050,1105],[1145,1050]],
    [[0,1510],[80,1465],[150,1425],[200,1385],[260,1360],[380,1320],[430,1303],[580,1262],[680,1240],[800,1225],[900,1212],[1000,1205],[1100,1190],[1180,1182],[1280,1182]],
    [[12,18],[50,30],[100,40],[150,50],[200,58],[280,68],[320,75],[390,100],[430,123],[510,157],[560,205],[610,230],[640,255],[700,280],[780,300],[860,318],[930,330],[1065,343],[1190,350],[1265,360],[1297,360]])
const ma120 = joinMain(
    [[10,1025],[120,1078],[190,1100],[290,1118],[400,1127],[500,1128],[550,1135],[730,1135],[800,1122],[900,1100],[985,1092],[1040,1078],[1130,1055],[1210,1038]],
    [[0,1538],[100,1510],[180,1493],[270,1480],[370,1472],[470,1470],[860,1465],[1210,1460]],
    [[12,300],[50,298],[200,285],[320,272],[450,258],[580,248],[660,238],[740,230],[860,215],[940,205],[1110,200],[1210,190],[1297,190]])
const ma250 = [[555,225],[620,237],[700,243],[780,255],[840,270],[910,272],[1000,290],[1100,312],[1190,328],[1265,340],[1297,345]].map(Z9)

const subRed = [...[[10,1075],[40,1072],[75,1050],[130,1035],[155,985],[180,920],[220,780],[280,590],[340,450],[385,395],[435,383],[465,393],[495,393],[545,348],[600,352],[650,343],[700,333],[725,350],[765,400],[800,425],[860,483],[890,483],[925,465],[965,420],[1005,390],[1045,345],[1075,345],[1100,370],[1135,430],[1175,540],[1225,720],[1255,840],[1300,1000],[1345,1110],[1390,1165],[1430,1193],[1475,1203],[1560,1208]].map(Z10),
    ...[[25,1208],[85,1155],[130,1075],[205,985],[245,950],[275,910],[330,780],[380,650],[420,565],[455,525],[483,517],[515,540],[565,625],[630,725],[670,732],[695,760],[745,850],[800,930],[840,985],[880,1060],[960,1125],[995,1127],[1020,1110],[1065,1050],[1125,1010],[1175,955],[1210,937],[1235,945],[1255,960],[1290,960],[1315,932],[1340,925]].map(Z11)]
const subGreen = [...[[10,1215],[50,1222],[95,1238],[135,1228],[190,1170],[250,1100],[285,1075],[345,1035],[375,1025],[420,980],[465,950],[520,875],[580,825],[620,760],[700,682],[780,625],[815,617],[870,615],[925,610],[965,593],[1035,580],[1100,602],[1140,625],[1200,690],[1250,750],[1300,820],[1370,905],[1410,935],[1470,1000],[1510,1055],[1560,1130]].map(Z10),
    ...[[0,1140],[95,1245],[130,1290],[190,1345],[230,1360],[265,1358],[295,1345],[340,1285],[390,1230],[465,1180],[545,1105],[610,1075],[665,1030],[750,1002],[810,1017],[850,1018],[900,1025],[960,1045],[1010,1105],[1095,1152],[1130,1162],[1180,1190],[1235,1225],[1280,1225],[1335,1245]].map(Z11)]
const subCyan = [...[[10,1300],[28,1305],[50,1287],[92,1302],[140,1230],[175,1190],[197,1142],[218,1170],[260,1138],[280,1180],[302,1202],[322,1150],[343,1125],[363,1170],[390,1110],[425,1080],[447,1095],[468,1085],[490,1050],[510,950],[530,815],[573,905],[595,645],[615,595],[636,715],[657,685],[678,595],[720,740],[741,800],[760,737],[780,745],[800,692],[825,665],[845,625],[865,490],[905,392],[926,540],[947,458],[968,525],[990,517],[1010,400],[1031,108],[1052,368],[1073,350],[1093,310],[1115,530],[1135,620],[1175,742],[1197,738],[1220,790],[1245,860],[1260,895],[1280,890],[1302,923],[1323,882],[1345,925],[1390,985],[1405,985],[1430,1025],[1470,1062],[1500,1062],[1530,1095],[1560,1103]].map(Z10),
    ...[[0,1105],[20,1085],[40,1080],[65,1088],[95,1085],[125,1100],[175,1140],[195,1148],[215,1142],[235,1162],[270,1140],[298,1138],[320,1100],[338,1040],[360,1078],[440,1135],[465,1143],[485,1103],[530,1135],[570,1140],[590,1185],[610,1180],[631,1127],[650,1152],[670,1152],[692,1185],[712,1157],[745,1160],[775,1197],[800,1187],[860,1222],[880,1228],[900,1220],[942,1268],[965,1245],[1025,1215],[1050,1215],[1085,1238],[1110,1235],[1150,1212],[1175,1222],[1195,1220],[1237,1260],[1258,1248],[1277,1207],[1298,1268],[1335,1240]].map(Z11)]

const out = []
const line = (pts, color, width) => out.push(`<polyline fill="none" stroke="${color}" stroke-width="${width}" stroke-linejoin="round" points="${pts.map(p => p[0].toFixed(1) + ',' + p[1].toFixed(1)).join(' ')}"/>`)
const seg = (x1, y1, x2, y2, color, width = 1, extra = '') => out.push(`<line x1="${x1}" y1="${y1}" x2="${x2}" y2="${y2}" stroke="${color}" stroke-width="${width}" ${extra}/>`)
const rect = (x, y, w, h, fill, extra = '') => out.push(`<rect x="${x}" y="${y}" width="${w}" height="${h}" fill="${fill}" ${extra}/>`)
const text = (x, y, cls, str, fill = '') => out.push(`<text x="${x}" y="${y}" class="${cls}"${fill ? ` fill="${fill}"` : ''}>${str}</text>`)
const dotted = y => seg(0, y, 1712, y, GRID, 1.5, 'stroke-dasharray="2 6"')

// main pane grid + axis
const prices = ['9.50', '9.00', '8.50', '8.00', '7.50', '7.00', '6.50', '6.00', '5.50', '5.00', '4.50']
prices.forEach((p, i) => {
    const y = Math.round(107.5 + i * 69.7)
    dotted(y)
    seg(1712, y, 1720, y, GRID, 1.5)
    if (i < 10) seg(1712, y + 35, 1716, y + 35, GRID, 1.5)
    text(1778, y + 7, 'axis-label', p)
})

function drawCandle(c, mapY) {
    const x = Math.round(candleX(c[0])) + .5
    const [hi, top, bot, lo] = c.slice(1, 5).map(mapY)
    const col = c[5] === 'r' ? RED : c[5] === 'c' ? CYAN : '#fff'
    const crisp = 'shape-rendering="crispEdges"'
    seg(x, hi, x, top, col, 1.4, crisp)
    seg(x, bot, x, lo, col, 1.4, crisp)
    if (c[5] === 'c') rect(x - 3.5, top, 7, bot - top, col, crisp)
    else if (c[5] === 'r') rect(x - 3, top, 6, bot - top, 'none', `stroke="${col}" stroke-width="1.5" ${crisp}`)
    else seg(x - 3.5, top, x + 3.5, top, col, 1.5, crisp)
}
candles7.forEach(c => drawCandle(c, y => 260 + y / 2.8))
candles8.forEach(c => drawCandle(c, y => 80 + y / 2.8))
candles9.forEach(c => drawCandle(c, y => 500 + y / 3))

line(ma120, '#b0b0b0', 2)
line(ma60, '#00d000', 1.8)
line(ma250, '#0000e8', 2)
line(ma20, '#e000e0', 1.6)
line(ma10, '#d8d800', 1.5)
line(ma5, '#e4e4e4', 1.3)

// the blanked patch in the middle of the price pane
rect(537, 643, 1083, 150, '#000')

// high / low marks
seg(591, 98, 608, 103, '#aaa')
seg(591, 98, 597, 96, '#aaa'); seg(591, 98, 596, 102, '#aaa')
text(612, 112, 'mark-label', '9.56')
seg(54, 794, 71, 794, '#aaa')
seg(54, 794, 59, 790, '#aaa'); seg(54, 794, 59, 798, '#aaa')
text(73, 800, 'mark-label', '4.57')

// event tags
rect(1336, 805, 18, 19, '#006a14')
text(1345, 821, 'tag-label', '减')
rect(1622, 805, 19, 19, '#103a70')
text(1631, 821, 'tag-label', '财')

// right price box
rect(1712, 685, 76, 23, '#000088', `stroke="${GRID}" stroke-width="2"`)
text(1712, 703, 'time-sel', '5.18')

// frame
seg(1711.5, 68, 1711.5, 1283, GRID, 2)
seg(0, 826.5, 1788, 826.5, GRID, 2)

// indicator pane
const subTicks = [[863, '100.0'], [902, '90.00'], [937, '80.00'], [974, '70.00'], [1009, '60.00'], [1048, '50.00'], [1083, '40.00'], [1122, '30.00'], [1157, '20.00']]
subTicks.forEach(([y, label], i) => {
    if (i % 2 === 0) dotted(y)
    seg(1712, y, i % 2 === 0 ? 1720 : 1716, y, GRID, 1.5)
    text(1778, y + 7, 'axis-label', label)
})

const redDays = [0, 1, 2, 3, 4, 5, 6, 7, 122, 123, 124, 125, 126, 127, 128, 134, 136, 138, 139]
const bars = [...Array(15).keys(), ...Array.from({ length: 26 }, (_, n) => n + 114)]
bars.forEach(i => {
    const x = Math.round(candleX(i)) - 1.5
    rect(x, 1156, 4, 37, '#ff8080', 'shape-rendering="crispEdges"')
    if (redDays.includes(i)) rect(x, 1174, 4, 19, '#ff0000', 'shape-rendering="crispEdges"')
})

line(subGreen, '#00b400', 1.6)
line(subCyan, '#00b4b4', 1.3)
line(subRed, '#ff0000', 3)

text(715, 1069, 'sig', '▲建仓', '#ffff00')
text(940, 1183, 'sig', '▲买牛', '#f0f0f0')
text(1408, 1168, 'sig', '▲建仓', '#ffff00')
text(1491, 1158, 'sig', '▲买牛', '#f0f0f0')

// time axis
seg(0, 1282.5, 1788, 1282.5, GRID, 2)
seg(0, 1305.5, 1788, 1305.5, GRID, 1.5)
;[86, 136, 297, 350, 401, 559, 610, 670, 774, 860, 1128, 1189, 1258].forEach(x => seg(x, 1283, x, 1287, GRID, 1.5))
;[233, 495, 704, 821, 950].forEach(x => seg(x, 1283, x, 1306, GRID, 1.5))
rect(704, 1283, 117, 22, '#000088')
text(5, 1301, 'time-label', '2022年')
text(235, 1301, 'time-label', '11')
text(497, 1301, 'time-label', '12')
text(706, 1300, 'time-sel', '2022/12/27/二')
text(952, 1301, 'time-label', '2')

document.getElementById('chart').innerHTML = out.join('')
```
